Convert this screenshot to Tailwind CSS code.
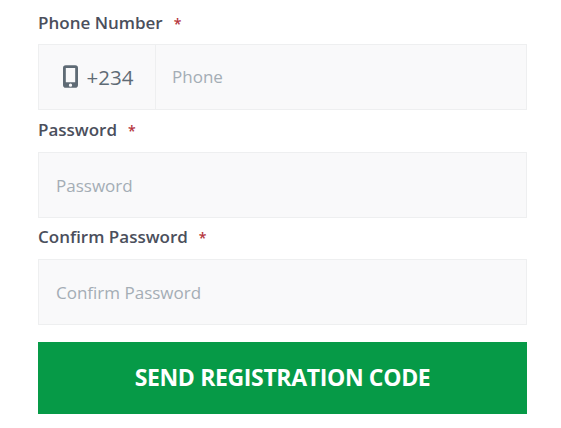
<!DOCTYPE html>
<html lang="en">
<head>
  <meta charset="UTF-8" />
  <meta name="viewport" content="width=device-width, initial-scale=1.0" />
  <title>Register</title>
  <script src="https://cdn.jsdelivr.net/npm/@tailwindcss/browser@4"></script>
</head>
<body class="bg-white font-['Open_Sans',sans-serif] overflow-hidden">
  <form class="w-[489px] ml-[38px] pt-[11px]">
    <label class="flex items-center h-6 text-[17px] font-semibold text-[#4b4f5c]">Phone Number<span class="ml-[11px] text-[#b5343c] text-[14px]">*</span></label>
    <div class="flex h-[66px] mt-[9px] bg-[#f9f9fa] border border-[#eeeff0]">
      <div class="flex items-center justify-center gap-[9px] w-[117px] pl-[2px] border-r border-[#eeeff0] text-[20.500px] text-[#5f6b75]">
        <svg class="w-[15px] h-[23px] -mt-0.5" viewBox="0 0 16 24" fill="none">
          <path fill="#5f6b75" fill-rule="evenodd" d="M3 0h10a3 3 0 0 1 3 3v18a3 3 0 0 1-3 3H3a3 3 0 0 1-3-3V3a3 3 0 0 1 3-3zm0 3v15h10V3zm5 16.500a1.750 1.750 0 1 0 0 3.500 1.750 1.750 0 0 0 0-3.500z"/>
        </svg>
        <span>+234</span>
      </div>
      <input type="text" placeholder="Phone" class="flex-1 min-w-0 pl-4 -mt-px text-[17px] bg-transparent outline-none placeholder:text-[#a4adb5]" />
    </div>
    <label class="flex items-center h-6 mt-2 text-[17px] font-semibold text-[#4b4f5c]">Password<span class="ml-[11px] text-[#b5343c] text-[14px]">*</span></label>
    <input type="password" placeholder="Password" class="block w-full h-[66px] mt-[10px] px-[17px] text-[17px] bg-[#f9f9fa] border border-[#eeeff0] outline-none placeholder:text-[#a4adb5]" />
    <label class="flex items-center h-6 mt-[7px] text-[17px] font-semibold text-[#4b4f5c]">Confirm Password<span class="ml-[11px] text-[#b5343c] text-[14px]">*</span></label>
    <input type="password" placeholder="Confirm Password" class="block w-full h-[66px] mt-[10px] px-[17px] text-[17px] bg-[#f9f9fa] border border-[#eeeff0] outline-none placeholder:text-[#a4adb5]" />
    <button type="button" class="block w-full h-[72px] mt-[17px] bg-[#069a47] text-white text-[23px] font-bold tracking-[-0.35px]"><span class="relative -top-px">SEND REGISTRATION CODE</span></button>
  </form>
</body>
</html>
